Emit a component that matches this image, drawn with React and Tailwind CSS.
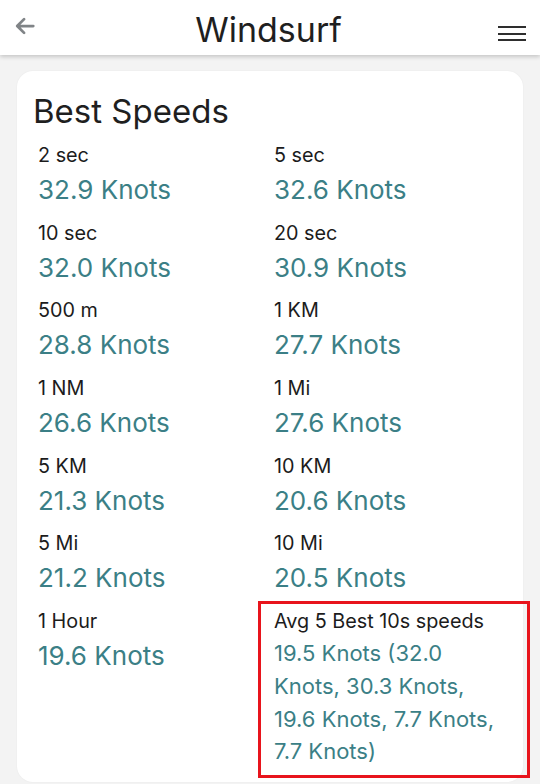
import React from "react";

const items = [
  ["2 sec", "32.9 Knots"],
  ["5 sec", "32.6 Knots"],
  ["10 sec", "32.0 Knots"],
  ["20 sec", "30.9 Knots"],
  ["500 m", "28.8 Knots"],
  ["1 KM", "27.7 Knots"],
  ["1 NM", "26.6 Knots"],
  ["1 Mi", "27.6 Knots"],
  ["5 KM", "21.3 Knots"],
  ["10 KM", "20.6 Knots"],
  ["5 Mi", "21.2 Knots"],
  ["10 Mi", "20.5 Knots"],
  ["1 Hour", "19.6 Knots"],
];

function Item({ label, value, boxed }) {
  return (
    <div className="relative">
      {boxed && (
        <div className="absolute -top-[6px] -left-[16px] w-[272px] -bottom-[10px] border-[3px] border-[#e8141c] pointer-events-none" />
      )}
      <div className="text-[19.8px] leading-[28px] text-[#1c1c1c]">{label}</div>
      <div
        className={
          boxed
            ? "mt-[2px] text-[22px] leading-[32.7px] text-[#3b7f86]"
            : "mt-[4px] text-[26px] leading-[33px] text-[#3b7f86]"
        }
      >
        {value}
      </div>
    </div>
  );
}

export default function App() {
  return (
    <div
      className="w-[540px] h-[784px] overflow-hidden bg-[#f3f3f3] relative"
      style={{ fontFamily: "Inter, 'Noto Sans', sans-serif" }}
    >
      <header className="relative z-10 h-[55px] bg-white shadow-[0_2px_4px_rgba(0,0,0,0.18)] flex items-center justify-between px-[14px]">
        <svg width="22" height="22" viewBox="0 0 24 24" className="-mt-[4px]">
          <path
            d="M21 12H4M11 4.5L3.5 12L11 19.5"
            fill="none"
            stroke="#808487"
            strokeWidth="3"
            strokeLinecap="round"
            strokeLinejoin="round"
          />
        </svg>
        <div className="absolute left-0 right-0 top-0 h-[55px] flex items-center justify-center pointer-events-none">
          <span className="text-[34px] leading-[40px] text-[#1f1f1f] mt-[4px] -ml-[3px]">Windsurf</span>
        </div>
        <div className="flex flex-col gap-[4.5px] mt-[12px] mr-0">
          <div className="w-[28px] h-[2px] bg-[#2e2e2e]" />
          <div className="w-[28px] h-[2px] bg-[#2e2e2e]" />
          <div className="w-[28px] h-[2px] bg-[#2e2e2e]" />
        </div>
      </header>
      <div className="px-[17px] pt-[16px]">
        <div className="bg-white rounded-[16px] h-[711px] px-[16px] pt-[20px] shadow-[0_0_2px_rgba(0,0,0,0.05)]">
          <h1 className="text-[33px] leading-[40px] text-[#1f1f1f] font-normal">Best Speeds</h1>
          <div className="mt-[10px] ml-[5px] grid grid-cols-[236px_1fr] gap-y-[12.7px]">
            {items.map(([l, v]) => (
              <Item key={l} label={l} value={v} />
            ))}
            <Item
              boxed
              label="Avg 5 Best 10s speeds"
              value="19.5 Knots (32.0 Knots, 30.3 Knots, 19.6 Knots, 7.7 Knots, 7.7 Knots)"
            />
          </div>
        </div>
      </div>
    </div>
  );
}
